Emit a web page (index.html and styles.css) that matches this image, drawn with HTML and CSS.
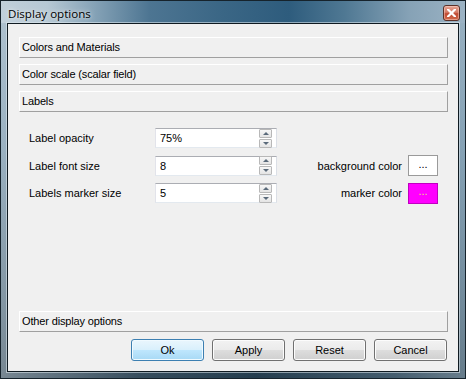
FILE: index.html
```html
<!DOCTYPE html>
<html>
<head>
<meta charset="utf-8">
<link rel="stylesheet" href="styles.css">
</head>
<body>
<div class="window">
  <div class="titlebar">
    <span class="title">Display options</span>
    <span class="close" aria-label="Close">
      <svg width="9" height="8" viewBox="0 0 9 8"><path d="M1 0.5 L8 7.5 M8 0.5 L1 7.5" stroke="#fff" stroke-width="2.2" stroke-linecap="square"/></svg>
    </span>
  </div>
  <div class="client">
    <div class="section">Colors and Materials</div>
    <div class="section">Color scale (scalar field)</div>
    <div class="section">Labels</div>
    <div class="panel">
      <div class="form">
        <div class="lbl">Label opacity</div>
        <div class="spin"><span class="val">75%</span><span class="arrows"><span class="up"></span><span class="down"></span></span></div>
        <div class="right"></div>

        <div class="lbl">Label font size</div>
        <div class="spin"><span class="val">8</span><span class="arrows"><span class="up"></span><span class="down"></span></span></div>
        <div class="right"><span>background color</span><button class="pick pick-white">...</button></div>

        <div class="lbl">Labels marker size</div>
        <div class="spin"><span class="val">5</span><span class="arrows"><span class="up"></span><span class="down"></span></span></div>
        <div class="right"><span>marker color</span><button class="pick pick-magenta">...</button></div>
      </div>
    </div>
    <div class="section">Other display options</div>
    <div class="buttons">
      <button class="btn btn-default">Ok</button>
      <button class="btn">Apply</button>
      <button class="btn">Reset</button>
      <button class="btn">Cancel</button>
    </div>
  </div>
</div>
</body>
</html>
```
FILE: styles.css
```css
html, body {
  margin: 0;
  padding: 0;
  background: #1f2f3a;
}
.window {
  width: 466px;
  height: 379px;
  box-sizing: border-box;
  border: 1px solid #16232c;
  padding: 0 6px 6px 6px;
  display: flex;
  flex-direction: column;
  background:
    linear-gradient(90deg, rgba(190,205,216,0.55) 0%, rgba(90,125,150,0.35) 30%, rgba(40,85,115,0.3) 55%, rgba(110,145,170,0.45) 85%, rgba(150,175,192,0.6) 100%),
    linear-gradient(180deg, #9fb6c6 0%, #6f8fa5 40%, #3d5565 80%, #22323d 100%);
  font-family: "Liberation Sans", Arial, sans-serif;
  font-size: 11px;
  color: #000;
}
.titlebar {
  height: 22px;
  display: flex;
  align-items: center;
  justify-content: space-between;
  margin: 0 -6px;
  padding: 0 6px 0 7px;
  background: linear-gradient(90deg, #c1d0db 0%, #b6c8d4 10%, #86a3b7 20%, #4d7592 32%, #3a6685 48%, #2e5c7d 62%, #4f7893 74%, #86a2b6 88%, #9cb3c4 100%);
}
.title {
  font-family: "Open Sans", "Noto Sans", sans-serif;
  font-size: 11.6px;
  color: #000;
  text-shadow: 0 0 6px rgba(255,255,255,0.7), 0 0 3px rgba(255,255,255,0.6);
  position: relative;
  top: 1px;
}
.close {
  width: 15px;
  height: 14px;
  margin-top: 2px;
  margin-right: -1px;
  border: 1px solid #5b3128;
  border-radius: 3px;
  background: linear-gradient(180deg, #e7a594 0%, #d47a66 45%, #c04a33 55%, #d06a4c 100%);
  display: flex;
  align-items: center;
  justify-content: center;
  box-shadow: inset 0 0 0 1px rgba(255,220,210,0.45);
}
.client {
  flex: 1;
  display: flex;
  flex-direction: column;
  background: #f0f0f0;
  border: 1px solid #0f1a21;
  box-shadow: 0 0 0 1px rgba(225,235,240,0.55);
  padding: 13px 10px 10px 11px;
}
.section {
  height: 19px;
  line-height: 19px;
  padding-left: 2px;
  border: 1px solid;
  border-color: #ffffff #a0a0a0 #a0a0a0 #ffffff;
  background: #f0f0f0;
  margin-bottom: 6px;
  letter-spacing: -0.15px;
}
.panel {
  flex: 1;
  padding: 10px 10px 0 10px;
}
.form {
  display: grid;
  grid-template-columns: 126px 122px 1fr;
  grid-auto-rows: 20px;
  row-gap: 7.5px;
  align-items: center;
}
.spin {
  height: 20px;
  box-sizing: border-box;
  border: 1px solid;
  border-color: #abadb3 #dbdfe6 #e3e9ef #e2e3ea;
  background: #fff;
  display: flex;
  align-items: center;
  justify-content: space-between;
  padding: 0 4px 0 4px;
}
.arrows {
  display: flex;
  flex-direction: column;
  gap: 1px;
}
.up, .down {
  width: 11px;
  height: 7px;
  border: 1px solid #b8b8b8;
  border-radius: 1px;
  background: linear-gradient(180deg, #f7f7f7, #e4e4e4);
  position: relative;
}
.up::after, .down::after {
  content: "";
  position: absolute;
  left: 3px;
  width: 0;
  height: 0;
  border-left: 3px solid transparent;
  border-right: 3px solid transparent;
}
.up::after {
  top: 2px;
  border-bottom: 3px solid #5a6a7a;
}
.down::after {
  top: 2px;
  border-top: 3px solid #5a6a7a;
}
.right {
  display: flex;
  justify-content: flex-end;
  align-items: center;
  gap: 6px;
}
.pick {
  width: 30px;
  height: 21px;
  box-sizing: border-box;
  border: 1px solid #9a9a9a;
  font-family: "Liberation Sans", Arial, sans-serif;
  font-size: 11px;
  line-height: 14px;
  padding: 0 0 4px 0;
  margin: 0;
}
.pick-white {
  background: #fff;
  color: #000;
}
.pick-magenta {
  background: #ff00ff;
  color: #e8e070;
  border-color: #c000c0;
}
.buttons {
  display: flex;
  justify-content: flex-end;
  gap: 8px;
  margin-top: 1px;
  margin-right: 1px;
}
.btn {
  width: 73px;
  height: 22px;
  box-sizing: border-box;
  border: 1px solid #707070;
  border-radius: 3px;
  background: linear-gradient(180deg, #f2f2f2 0%, #ebebeb 48%, #dddddd 52%, #cfcfcf 100%);
  box-shadow: inset 0 0 0 1px #fcfcfc;
  font-family: "Liberation Sans", Arial, sans-serif;
  font-size: 11px;
  color: #000;
  padding: 0;
  margin: 0;
}
.btn-default {
  border-color: #3c7fb1;
  background: linear-gradient(180deg, #eaf6fd 0%, #d9f0fc 48%, #bee6fd 52%, #a7d9f5 100%);
  box-shadow: inset 0 0 0 1px #f0faff;
}
```
